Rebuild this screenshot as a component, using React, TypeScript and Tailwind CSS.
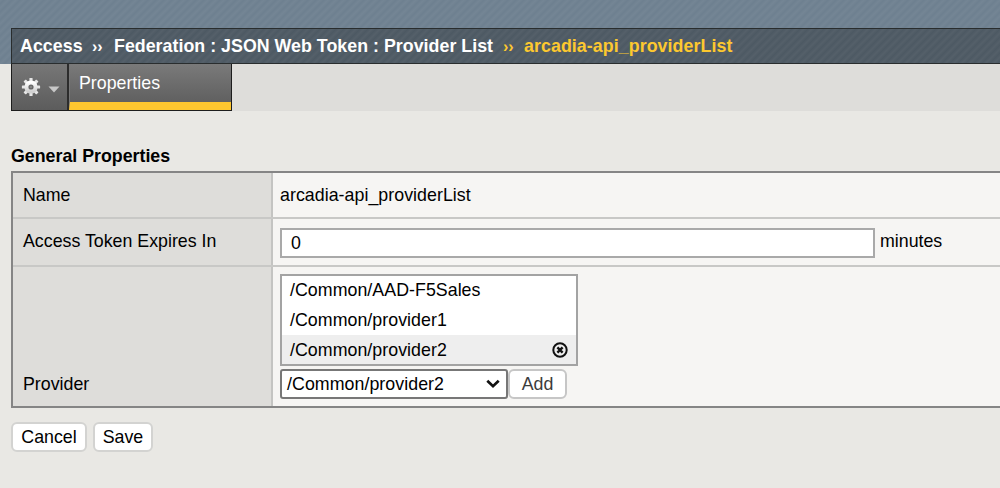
const STRIPES =
  "bg-[repeating-linear-gradient(135deg,rgba(255,255,255,0.045)_0px,transparent_2.83px,rgba(255,255,255,0.045)_5.657px)]";

function GearIcon() {
  const teeth = [0, 45, 90, 135, 180, 225, 270, 315];
  return (
    <svg width="20" height="20" viewBox="0 0 20 20" className="shrink-0">
      <defs>
        <linearGradient id="gear" x1="0" y1="0" x2="0" y2="1">
          <stop offset="0" stopColor="#ffffff" />
          <stop offset="1" stopColor="#d0d0d0" />
        </linearGradient>
      </defs>
      <g fill="#e6e6e6">
        {teeth.map((a) => (
          <rect key={a} x="8.4" y="0.9" width="3.2" height="5" rx="0.6" transform={`rotate(${a} 10 10)`} />
        ))}
      </g>
      <circle cx="10" cy="10" r="4.6" fill="none" stroke="url(#gear)" strokeWidth="4" />
      <circle cx="10" cy="10" r="1.1" fill="#8c8c8c" />
    </svg>
  );
}

function RemoveIcon() {
  return (
    <svg width="16" height="16" viewBox="0 0 16 16" className="shrink-0">
      <circle cx="8" cy="8" r="6.7" fill="none" stroke="#111" strokeWidth="2" />
      <path d="M5.4 5.4 L10.6 10.6 M10.6 5.4 L5.4 10.6" stroke="#111" strokeWidth="2.4" />
    </svg>
  );
}

function Header() {
  return (
    <header className={`h-16 bg-[#6e8090] pl-[11px] pt-7 ${STRIPES}`}>
      <div
        className={`flex h-9 items-center whitespace-pre border-y border-l border-[#292d2e] bg-[#4d5963] pl-[7px] font-bold text-white ${STRIPES}`}
      >
        <span className="w-[73px] pl-px tracking-[0.05px]">Access</span>
        <span className="w-[22px] pt-px text-base leading-4">››</span>
        <span className="w-[389px] tracking-[0.03px]">Federation : JSON Web Token : Provider List</span>
        <span className="w-[21px] pt-px text-base leading-4 text-[#fdc82f]">››</span>
        <span className="tracking-[0.08px] text-[#fdc82f]">arcadia-api_providerList</span>
      </div>
    </header>
  );
}

function Tabs() {
  return (
    <nav className="flex h-[47px] pl-[11px]">
      <div className="flex h-full w-[221px] border border-t-0 border-[#1d1d1d]">
        <div className="flex w-[57px] items-center border-r-2 border-[#2c2c2c] bg-linear-to-b from-[#777] to-[#5c5c5c] pl-[9px]">
          <GearIcon />
          <svg width="12" height="7" viewBox="0 0 12 7" className="ml-[7px] mt-1">
            <path d="M0.5 0.5 H11.5 L6 6.5 Z" fill="#c8c8c8" />
          </svg>
        </div>
        <div className="flex-1 border-b-8 border-l border-b-[#fdc62f] border-l-[#777] bg-linear-to-b from-[#7a7a7a] to-[#606060] pl-[9px] pt-[5px] text-white">
          Properties
        </div>
      </div>
      <div className="flex-1 bg-[#dedddA]" />
    </nav>
  );
}

const label = "w-[260px] shrink-0 border-r-2 border-[#c4c4c2] bg-[#dedddA] pl-[10px]";

function GeneralProperties() {
  return (
    <section className="pl-[11px]">
      <h2 className="mb-1 h-6 pt-0.5 font-bold leading-[22px]">General Properties</h2>
      <div className="h-[237px] border-y-2 border-l-2 border-[#858585] bg-[#f6f5f3]">
        <div className="flex h-[46px] border-b-2 border-[#c8c8c6]">
          <div className={`${label} pt-[8px]`}>Name</div>
          <div className="pl-[7px] pt-[8px] tracking-[0.04px]">arcadia-api_providerList</div>
        </div>
        <div className="flex h-12 border-b-2 border-[#c8c8c6]">
          <div className={`${label} pt-[8px]`}>Access Token Expires In</div>
          <div className="flex pl-[7px] pt-[9px]">
            <div className="mr-[5px] h-[30px] w-[595px] border-2 border-[#a9a9a9] bg-white pl-[9px] leading-[26px]">0</div>
            <span className="-mt-px">minutes</span>
          </div>
        </div>
        <div className="flex h-[139px]">
          <div className={`${label} pt-[103px]`}>Provider</div>
          <div className="pl-[7px] pt-[7px]">
            <ul className="h-[92px] w-[298px] border-2 border-[#a3a3a3] bg-white tracking-[0.04px]">
              <li className="h-[30px] pl-2">/Common/AAD-F5Sales</li>
              <li className="h-[30px] pl-2">/Common/provider1</li>
              <li className="-mt-px flex h-[29px] items-center justify-between bg-[#eee] pl-2 pr-[8px]">
                /Common/provider2
                <RemoveIcon />
              </li>
            </ul>
            <div className="mt-[3px] flex">
              <div className="flex h-[30px] w-[228px] items-center justify-between rounded-[3px] border-2 border-[#777] bg-white pl-[5px] pr-[6px]">
                <span className="tracking-[0.05px]">/Common/provider2</span>
                <svg width="14" height="10" viewBox="0 0 14 10">
                  <path d="M1.3 1.7 L7 7.2 L12.7 1.7" fill="none" stroke="#111" strokeWidth="2.7" />
                </svg>
              </div>
              <div className="h-[30px] w-[59px] rounded-[6px] border-2 border-[#c6c6c6] bg-white text-center leading-[26px] text-[#3c3c3c]">
                Add
              </div>
            </div>
          </div>
        </div>
      </div>
    </section>
  );
}

export default function App() {
  return (
    <div className="h-[488px] w-[1000px] overflow-hidden bg-[#e9e8e4] font-['Liberation_Sans',Arial,sans-serif] text-[17.8px] leading-7 text-black">
      <Header />
      <Tabs />
      <div className="h-[32px]" />
      <GeneralProperties />
      <div className="flex gap-[7px] pl-[11px] pt-[14px] text-center leading-[26px]">
        <div className="h-[30px] w-[76px] rounded-[6px] border-2 border-[#d3d3d1] bg-white">Cancel</div>
        <div className="-ml-px h-[30px] w-[60px] rounded-[6px] border-2 border-[#d3d3d1] bg-white">Save</div>
      </div>
    </div>
  );
}
